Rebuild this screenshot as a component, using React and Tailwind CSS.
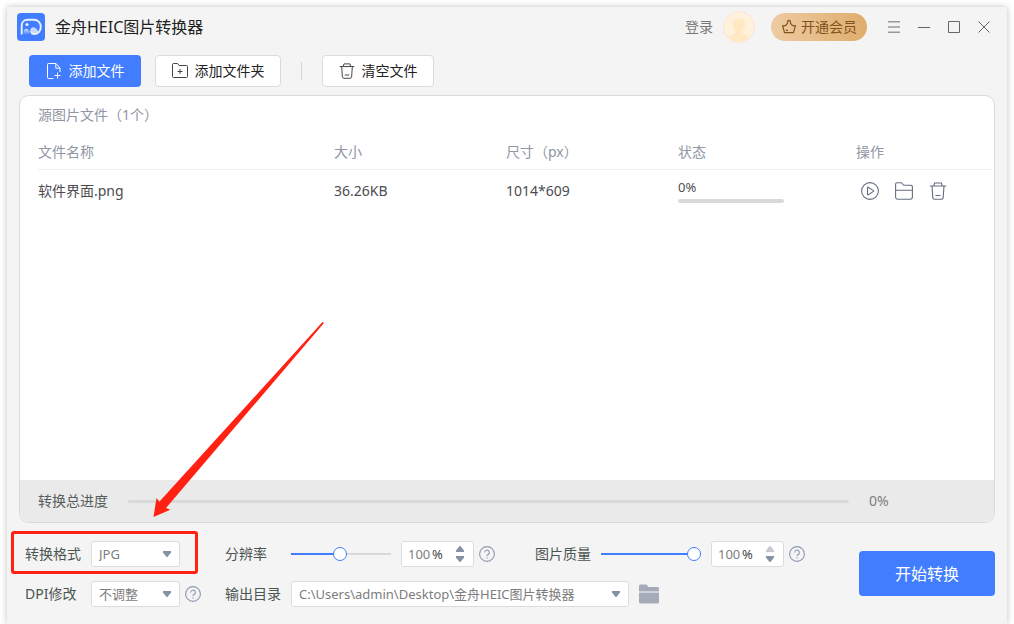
import { useState } from "react";

const files = [{ name: "软件界面.png", size: "36.26KB", dimension: "1014*609", progress: 0 }];

const Logo = () => (
  <svg className="w-7 h-7 shrink-0" viewBox="0 0 28 28" fill="none">
    <defs>
      <linearGradient id="hill" x1="0" y1="0" x2="0" y2="1">
        <stop offset="0" stopColor="#fff" stopOpacity="0.75" />
        <stop offset="1" stopColor="#fff" stopOpacity="0.1" />
      </linearGradient>
    </defs>
    <rect width="28" height="28" rx="4" fill="#417dfe" />
    <path
      d="M4.7 20.8V12.6C4.7 9 7.2 6.8 10.5 6.8H17c4 0 6.8 3 6.8 7 0 4.2-2.8 7.3-6.6 7.3-1 0-1.6-.2-2.2-.6"
      stroke="#e9f0ff"
      strokeWidth="1.9"
      strokeLinecap="round"
    />
    <circle cx="10" cy="11.5" r="1.6" fill="#e9f0ff" />
    <path d="M6.5 21c0-3.6 1-5.2 2.6-5.2 1.7 0 2.6 1.4 4 3.2l-.6 2z" fill="url(#hill)" />
    <path d="M13 18.800c.2-3 1.300-4.600 3.200-4.600 2.200 0 3.900 2 5.200 4.400-1.200 1.600-2.900 2.400-4.800 2.400-1.700 0-3.200-.7-3.600-2.200z" fill="#fff" fillOpacity="0.7" />
  </svg>
);

const AddFileIcon = () => (
  <svg className="w-4 h-4" viewBox="0 0 16 16" fill="none" stroke="currentColor">
    <path d="M7.5 15.5h-5a1 1 0 0 1-1-1v-13a1 1 0 0 1 1-1H10L14 5v4M9.8.8v4.4h4" />
    <path d="M11.5 9.5v6M8.5 12.5h6" />
  </svg>
);

const AddFolderIcon = () => (
  <svg className="w-4 h-4 text-[#444444]" viewBox="0 0 16 16" fill="none" stroke="currentColor">
    <path d="M.5 13.5v-12a1 1 0 0 1 1-1h4l1.6 2h7.4a1 1 0 0 1 1 1v10a1 1 0 0 1-1 1h-13a1 1 0 0 1-1-1z" />
    <path d="M8 6v5M5.5 8.5h5" />
  </svg>
);

const TrashIcon = ({ className }) => (
  <svg className={className} viewBox="0 0 18 18" fill="none" stroke="currentColor" strokeWidth="1.1">
    <path d="M.8 4h16.4M4.8 4l.8-3h6.8l.8 3M3 4l.8 11.6c.1.9.8 1.6 1.7 1.6h7c.9 0 1.6-.7 1.7-1.6L15 4M6.5 13.5h5" />
  </svg>
);

const FolderIcon = () => (
  <svg className="w-[18px] h-[18px]" viewBox="0 0 18 18" fill="none" stroke="currentColor" strokeWidth="1.1">
    <path d="M.6 15V2.2A1.5 1.5 0 0 1 2.1.7h4.3l2.4 2.6h7.1a1.5 1.5 0 0 1 1.5 1.5V15a2.2 2.2 0 0 1-2.2 2.2H2.8A2.2 2.2 0 0 1 .6 15zM.6 8.2h16.8" />
  </svg>
);

const PlayIcon = () => (
  <svg className="w-[18px] h-[18px]" viewBox="0 0 18 18" fill="none" stroke="currentColor" strokeWidth="1.1">
    <circle cx="9" cy="9" r="8.4" />
    <path d="M6.5 5.6v6.8c0 .4.4.6.7.4l5.3-3.4c.3-.2.3-.6 0-.8L7.2 5.2c-.3-.2-.7 0-.7.4z" />
  </svg>
);

const CrownIcon = () => (
  <svg className="w-4 h-4" viewBox="0 0 16 16" fill="none" stroke="currentColor" strokeWidth="1.2" strokeLinejoin="round">
    <path d="M3.5 13.6 1.6 6.6c1.5.5 2.6.2 3.5-.6.9-.8 1.2-1.6 1.6-2.4a1.5 1.5 0 1 1 2.6 0c.4.8.7 1.6 1.6 2.4.9.8 2 1.1 3.5.6l-1.9 7zM4.8 11.4h2.2" />
  </svg>
);

const HelpButton = ({ label }) => (
  <button type="button" aria-label={label} className="text-[#8e99b0] shrink-0">
    <svg className="w-4 h-4" viewBox="0 0 16 16" fill="none" stroke="currentColor" strokeWidth="1.1">
      <circle cx="8" cy="8" r="7.4" />
      <path d="M5.7 6.5a2.3 2.3 0 1 1 3.4 2c-.8.4-1.1.8-1.1 1.6M8 11.2v1.3" />
    </svg>
  </button>
);

const Select = ({ id, value, options, className }) => (
  <div className={`relative h-[26px] ${className}`}>
    <select
      id={id}
      defaultValue={value}
      className="w-full h-full appearance-none rounded-[3px] border border-[#dcdcdc] bg-white pl-[7px] pr-6 text-[13px] text-[#7d7d7d] outline-none"
    >
      {options.map((option) => (
        <option key={option}>{option}</option>
      ))}
    </select>
    <svg className="pointer-events-none absolute right-[9px] top-[10px] w-2 h-[6px]" viewBox="0 0 8 6">
      <path d="M0 0h8v1.5L4.5 6h-1L0 1.5z" fill="#8592a6" />
    </svg>
  </div>
);

const Slider = ({ id, value, onChange }) => (
  <input
    id={id}
    type="range"
    value={value}
    onChange={(e) => onChange(Number(e.target.value))}
    className="w-[100px] h-[14px] shrink-0 appearance-none bg-transparent bg-no-repeat bg-center bg-[length:100%_2px] [&::-webkit-slider-thumb]:appearance-none [&::-webkit-slider-thumb]:w-[14px] [&::-webkit-slider-thumb]:h-[14px] [&::-webkit-slider-thumb]:rounded-full [&::-webkit-slider-thumb]:border [&::-webkit-slider-thumb]:border-[#417dfe] [&::-webkit-slider-thumb]:bg-white"
    style={{ backgroundImage: `linear-gradient(to right, #417dfe ${value}%, #d9d9d9 ${value}%)` }}
  />
);

const PercentBox = ({ label, atMax }) => {
  const [percent, setPercent] = useState(100);

  return (
    <div className="flex items-center w-[73px] h-[26px] shrink-0 rounded-[3px] border border-[#dcdcdc] bg-white pl-[6px] pr-[9px] text-[13px]">
      <input
        type="text"
        aria-label={label}
        value={percent}
        onChange={(e) => setPercent(Number(e.target.value) || 0)}
        className="w-6 text-[#7d7d7d] outline-none"
      />
      <span className="text-[#444444]">%</span>
      <div className="ml-auto flex flex-col gap-1">
        <button
          type="button"
          aria-label={`${label}增加`}
          onClick={() => setPercent(percent + 1)}
          className={atMax ? "text-[#c4c8d0]" : "text-[#8592a6]"}
        >
          <svg className="block w-2 h-[6px]" viewBox="0 0 8 6" fill="currentColor">
            <path d="M3.5 0h1L8 4.5V6H0V4.5z" />
          </svg>
        </button>
        <button type="button" aria-label={`${label}减少`} onClick={() => setPercent(percent - 1)} className="text-[#8592a6]">
          <svg className="block w-2 h-[6px]" viewBox="0 0 8 6" fill="currentColor">
            <path d="M0 0h8v1.5L4.5 6h-1L0 1.5z" />
          </svg>
        </button>
      </div>
    </div>
  );
};

const TitleBar = () => (
  <header className="flex items-center h-10 pl-[10px] pr-[17px]">
    <Logo />
    <h1 className="ml-[10px] text-base text-[#222222]">金舟HEIC图片转换器</h1>
    <a href="#login" className="ml-auto text-[#777777]">
      登录
    </a>
    <svg className="ml-[10px] w-8 h-8" viewBox="0 0 32 32">
      <circle cx="16" cy="16" r="15.5" fill="#fff1dc" stroke="#fde3dc" />
      <path
        d="M16 7c3.8 0 6 2.6 6 6.3 0 3-1.2 5.4-2.6 6.7-.6 1.7 0 2.6 1.6 3.2 2.2.8 4 1.4 5 2.8A15 15 0 0 1 16 31 15 15 0 0 1 6 26c1-1.4 2.8-2 5-2.8 1.6-.6 2.2-1.5 1.6-3.2-1.4-1.3-2.6-3.7-2.6-6.7C10 9.6 12.2 7 16 7z"
        fill="#ffe8c2"
      />
    </svg>
    <button
      type="button"
      className="ml-4 flex items-center justify-center gap-1 w-24 h-7 rounded-full bg-linear-to-r from-[#eecba3] to-[#dfad6c] text-[#80531a]"
    >
      <CrownIcon />
      开通会员
    </button>
    <div className="ml-[21px] flex items-center gap-[18px] text-[#666666]">
      <button type="button" aria-label="菜单" className="text-[#999999]">
        <svg className="block w-3 h-3" viewBox="0 0 12 12" stroke="currentColor" strokeWidth="1.5">
          <path d="M0 .8h12M0 6h12M0 11.2h12" />
        </svg>
      </button>
      <button type="button" aria-label="最小化">
        <svg className="block w-3 h-3" viewBox="0 0 12 12" stroke="currentColor">
          <path d="M0 6.5h12" />
        </svg>
      </button>
      <button type="button" aria-label="最大化">
        <svg className="block w-3 h-3" viewBox="0 0 12 12" fill="none" stroke="currentColor">
          <path d="M.5.5h11v11H.5z" />
        </svg>
      </button>
      <button type="button" aria-label="关闭">
        <svg className="block w-3 h-3" viewBox="0 0 12 12" stroke="currentColor">
          <path d="M.5.5l11 11M11.5.5l-11 11" />
        </svg>
      </button>
    </div>
  </header>
);

const Toolbar = () => (
  <div className="flex items-center py-2 pl-[22px]">
    <button type="button" className="flex items-center justify-center gap-[7px] w-28 h-8 rounded bg-[#417dfe] text-white">
      <AddFileIcon />
      添加文件
    </button>
    <button
      type="button"
      className="ml-[14px] flex items-center justify-center gap-[7px] w-[126px] h-8 rounded border border-[#dadbe0] bg-white text-[#222222]"
    >
      <AddFolderIcon />
      添加文件夹
    </button>
    <div className="mx-5 w-px h-[18px] bg-[#d5d5d5]" />
    <button
      type="button"
      className="flex items-center justify-center gap-[7px] w-28 h-8 rounded border border-[#dadbe0] bg-white text-[#222222]"
    >
      <TrashIcon className="w-4 h-4 text-[#444444]" />
      清空文件
    </button>
  </div>
);

const FilePanel = () => (
  <section className="flex-1 flex flex-col mx-3 rounded-[10px] border border-[#dadada] bg-white overflow-hidden">
    <h2 className="flex items-center h-10 pl-[18px] pb-[2px] text-[#9096a3]">源图片文件（1个）</h2>
    <div className="flex-1 pl-[18px] pr-[2px]">
      <table className="w-full table-fixed text-left">
        <thead>
          <tr className="border-b border-[#efefef] text-[#9096a3]">
            <th className="w-[296px] h-[33px] font-normal">文件名称</th>
            <th className="w-[172px] font-normal">大小</th>
            <th className="w-[172px] font-normal">尺寸（px）</th>
            <th className="w-[178px] font-normal">状态</th>
            <th className="font-normal">操作</th>
          </tr>
        </thead>
        <tbody>
          {files.map((file) => (
            <tr key={file.name} className="text-[#4c4c50]">
              <td className="h-11">{file.name}</td>
              <td>{file.size}</td>
              <td>{file.dimension}</td>
              <td className="pb-[2px]">
                <div className="text-[13px] leading-5">{file.progress}%</div>
                <div className="mt-[2px] w-[106px] h-1 rounded-full bg-[#d9d9d9]">
                  <div className="h-full rounded-full bg-[#417dfe]" style={{ width: `${file.progress}%` }} />
                </div>
              </td>
              <td>
                <div className="flex gap-4 pl-[5px] text-[#646d80]">
                  <button type="button" aria-label="播放">
                    <PlayIcon />
                  </button>
                  <button type="button" aria-label="打开文件夹">
                    <FolderIcon />
                  </button>
                  <button type="button" aria-label="删除">
                    <TrashIcon className="w-[18px] h-[18px]" />
                  </button>
                </div>
              </td>
            </tr>
          ))}
        </tbody>
      </table>
    </div>
    <div className="flex items-center h-[42px] px-[18px] bg-[#eaeaea] text-[#555d5a]">
      <span>转换总进度</span>
      <div className="ml-5 mr-5 flex-1 h-[3px] rounded-full bg-[#d9d9d9]" />
      <span className="w-[107px] text-[#7d7d7d]">0%</span>
    </div>
  </section>
);

const FormatHighlight = () => (
  <>
    <div className="pointer-events-none absolute -left-[14px] -right-[18px] -top-[10px] -bottom-[7px] rounded-[3px] border-3 border-[#ff2213]" />
    <svg className="pointer-events-none absolute left-32 bottom-12 w-[172px] h-[197px]" viewBox="0 0 172 197">
      <path d="M169.5 0 171 1 13 186l4.300 1.700L.5 195l3-19 2.800 3.700z" fill="#ff2213" />
    </svg>
  </>
);

const Settings = () => {
  const [resolution, setResolution] = useState(49);
  const [quality, setQuality] = useState(100);

  return (
    <footer className="flex items-start pt-[18px] pb-[17px] pl-[18px] pr-3 text-[#4b5552]">
      <div className="flex-1 grid grid-cols-[200px_310px_auto] gap-y-[14px]">
        <div className="relative flex items-center gap-[10px] w-[155px]">
          <label htmlFor="format" className="w-14">
            转换格式
          </label>
          <Select id="format" value="JPG" options={["JPG", "PNG", "BMP"]} className="w-[89px]" />
          <FormatHighlight />
        </div>
        <div className="flex items-center gap-[10px]">
          <label htmlFor="resolution" className="w-14">
            分辨率
          </label>
          <Slider id="resolution" value={resolution} onChange={setResolution} />
          <div className="flex items-center gap-[5px]">
            <PercentBox label="分辨率" />
            <HelpButton label="分辨率说明" />
          </div>
        </div>
        <div className="flex items-center gap-[10px]">
          <label htmlFor="quality" className="w-14">
            图片质量
          </label>
          <Slider id="quality" value={quality} onChange={setQuality} />
          <div className="flex items-center gap-[5px]">
            <PercentBox label="图片质量" atMax />
            <HelpButton label="图片质量说明" />
          </div>
        </div>
        <div className="flex items-center gap-[10px]">
          <label htmlFor="dpi" className="w-14">
            DPI修改
          </label>
          <div className="flex items-center gap-[5px]">
            <Select id="dpi" value="不调整" options={["不调整", "72", "300"]} className="w-[89px]" />
            <HelpButton label="DPI说明" />
          </div>
        </div>
        <div className="col-span-2 flex items-center gap-[10px]">
          <label htmlFor="output" className="w-14">
            输出目录
          </label>
          <Select
            id="output"
            value="C:\Users\admin\Desktop\金舟HEIC图片转换器"
            options={["C:\\Users\\admin\\Desktop\\金舟HEIC图片转换器"]}
            className="w-[338px]"
          />
          <button type="button" aria-label="打开输出目录">
            <svg className="block w-5 h-5" viewBox="0 0 20 20" fill="#a5abb8">
              <path d="M0 7.5V2A1.5 1.5 0 0 1 1.5.5h6L9.5 3h9A1.5 1.5 0 0 1 20 4.5v3z" />
              <path d="M0 7.5h20V9H0z" fill="#d0d3da" />
              <path d="M0 9h20v9a1.5 1.5 0 0 1-1.5 1.5h-17A1.5 1.5 0 0 1 0 18z" />
            </svg>
          </button>
        </div>
      </div>
      <button type="button" className="mt-[10px] w-[136px] h-[45px] shrink-0 rounded bg-[#417dfe] text-base text-white">
        开始转换
      </button>
    </footer>
  );
};

const App = () => {
  return (
    <div className="flex min-h-screen bg-white px-[7px] pt-[7px] font-['Noto_Sans','Noto_Sans_CJK_SC',sans-serif] text-sm">
      <div className="flex-1 flex flex-col rounded-t-[3px] bg-[#f4f4f4] shadow-[0_0_6px_rgba(0,0,0,0.25)]">
        <TitleBar />
        <Toolbar />
        <FilePanel />
        <Settings />
      </div>
    </div>
  );
};

export default App;
